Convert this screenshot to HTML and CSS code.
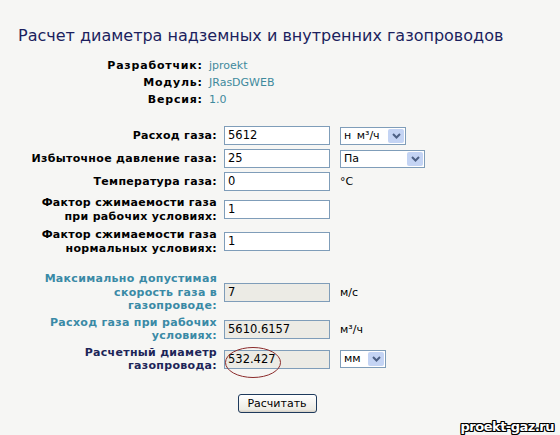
FILE: index.html
```html
<!DOCTYPE html>
<html lang="ru">
<head>
<meta charset="utf-8">
<title>Расчет диаметра</title>
<link rel="stylesheet" href="styles.css">
</head>
<body>
<div class="page">
  <h1 class="title">Расчет диаметра надземных и внутренних газопроводов</h1>

  <div class="info">
    <div class="info-label">Разработчик:</div><div class="info-value">jproekt</div>
    <div class="info-label">Модуль:</div><div class="info-value">JRasDGWEB</div>
    <div class="info-label">Версия:</div><div class="info-value">1.0</div>
  </div>

  <div class="form">
    <div class="label">Расход газа:</div>
    <div class="field"><div class="input">5612</div></div>
    <div class="unit"><div class="select w66"><span class="sel-text">н м³/ч</span><span class="sel-btn"><svg width="9" height="6" viewBox="0 0 9 6"><path d="M1 1 L4.5 4.5 L8 1" fill="none" stroke="#4d6185" stroke-width="2"/></svg></span></div></div>

    <div class="label">Избыточное давление газа:</div>
    <div class="field"><div class="input">25</div></div>
    <div class="unit"><div class="select w85"><span class="sel-text">Па</span><span class="sel-btn"><svg width="9" height="6" viewBox="0 0 9 6"><path d="M1 1 L4.5 4.5 L8 1" fill="none" stroke="#4d6185" stroke-width="2"/></svg></span></div></div>

    <div class="label">Температура газа:</div>
    <div class="field"><div class="input">0</div></div>
    <div class="unit"><span class="unit-text">°C</span></div>

    <div class="label two">Фактор сжимаемости газа<br>при рабочих условиях:</div>
    <div class="field"><div class="input">1</div></div>
    <div class="unit"></div>

    <div class="label two">Фактор сжимаемости газа<br>нормальных условиях:</div>
    <div class="field"><div class="input">1</div></div>
    <div class="unit"></div>
  </div>

  <div class="form results">
    <div class="label teal">Максимально допустимая<br>скорость газа в<br>газопроводе:</div>
    <div class="field"><div class="input ro">7</div></div>
    <div class="unit"><span class="unit-text">м/с</span></div>

    <div class="label teal">Расход газа при рабочих<br>условиях:</div>
    <div class="field"><div class="input ro">5610.6157</div></div>
    <div class="unit"><span class="unit-text">м³/ч</span></div>

    <div class="label navy">Расчетный диаметр<br>газопровода:</div>
    <div class="field mark"><div class="input ro">532.427</div>
      <svg class="ellipse" width="58" height="33" viewBox="0 0 58 33"><ellipse cx="29" cy="16.5" rx="27.5" ry="15" fill="none" stroke="#8a2a2a" stroke-width="1"/></svg>
    </div>
    <div class="unit"><div class="select w46"><span class="sel-text">мм</span><span class="sel-btn"><svg width="9" height="6" viewBox="0 0 9 6"><path d="M1 1 L4.5 4.5 L8 1" fill="none" stroke="#4d6185" stroke-width="2"/></svg></span></div></div>

    <div class="label"></div>
    <div class="field btn-cell"><button class="btn" type="button">Расчитать</button></div>
    <div class="unit"></div>
  </div>

  <div class="watermark">proekt-gaz.ru</div>
</div>
</body>
</html>
```

FILE: styles.css
```css
* { box-sizing: border-box; }
html, body { margin: 0; padding: 0; }
body {
  background: #f6f6f4;
  font-family: "DejaVu Sans", Verdana, sans-serif;
  font-size: 11px;
  color: #000;
  width: 560px;
  height: 435px;
  overflow: hidden;
}
.page {
  position: relative;
  width: 560px;
  height: 435px;
  padding-top: 26px;
}
.title {
  margin: 0 0 0 18px;
  font-size: 16px;
  font-weight: normal;
  color: #1c1f5e;
  line-height: 20px;
  white-space: nowrap;
}
.info {
  display: grid;
  grid-template-columns: 202px auto;
  column-gap: 7px;
  row-gap: 3px;
  margin-top: 13px;
  line-height: 14px;
}
.info-label {
  text-align: right;
  font-weight: bold;
  letter-spacing: 0.8px;
  margin-right: -0.8px;
}
.info-value {
  color: #3f8a9d;
}
.form {
  display: grid;
  grid-template-columns: 217px 106px auto;
  column-gap: 7px;
  row-gap: 4px;
  margin-top: 19px;
  align-items: center;
}
.label {
  text-align: right;
  font-weight: bold;
  line-height: 13.5px;
  white-space: nowrap;
  letter-spacing: 0.3px;
}
.label.two { min-height: 27px; padding-top: 1px; }
.teal { color: #3a8aa6; }
.navy { color: #1d2558; }
.field { position: relative; }
.input {
  height: 19px;
  border: 1px solid #7f9db9;
  background: #fff;
  padding: 0 3px;
  line-height: 17px;
  font-size: 11.5px;
}
.input.ro { background: #ecebe5; }
.unit { padding-left: 3px; display: flex; align-items: center; }
.unit-text { font-size: 11px; }
.select {
  height: 18px;
  border: 1px solid #7f9db9;
  background: #fff;
  display: flex;
  align-items: stretch;
  justify-content: space-between;
}
.w66 { width: 66px; }
.w85 { width: 85px; }
.w46 { width: 46px; }
.sel-text { padding-left: 3px; line-height: 16px; font-size: 11px; word-spacing: 2px; }
.sel-btn {
  width: 16px;
  margin: 1px;
  background: #c4d4f4;
  border-radius: 2px;
  display: flex;
  align-items: center;
  justify-content: center;
}
.results { margin-top: 17px; row-gap: 3px; }
.ellipse {
  position: absolute;
  left: 0;
  top: -4px;
}
.btn-cell { display: flex; justify-content: center; padding-top: 18px; }
.btn {
  width: 79px;
  height: 19px;
  border: 1px solid #1e3a5c;
  border-radius: 3px;
  background: linear-gradient(#ffffff, #ecebe4 85%, #d6d0c5);
  font-family: "DejaVu Sans", Verdana, sans-serif;
  font-size: 11px;
  color: #000;
  padding: 0;
}
.watermark {
  position: absolute;
  right: 6px;
  bottom: 1px;
  font-weight: bold;
  font-size: 13px;
  color: #fff;
  letter-spacing: -0.5px;
  text-shadow: 1px 0 0 #000, -1px 0 0 #000, 0 1px 0 #000, 0 -1px 0 #000, 1px 1px 0 #000, -1px -1px 0 #000, 1px -1px 0 #000, -1px 1px 0 #000;
}
```
